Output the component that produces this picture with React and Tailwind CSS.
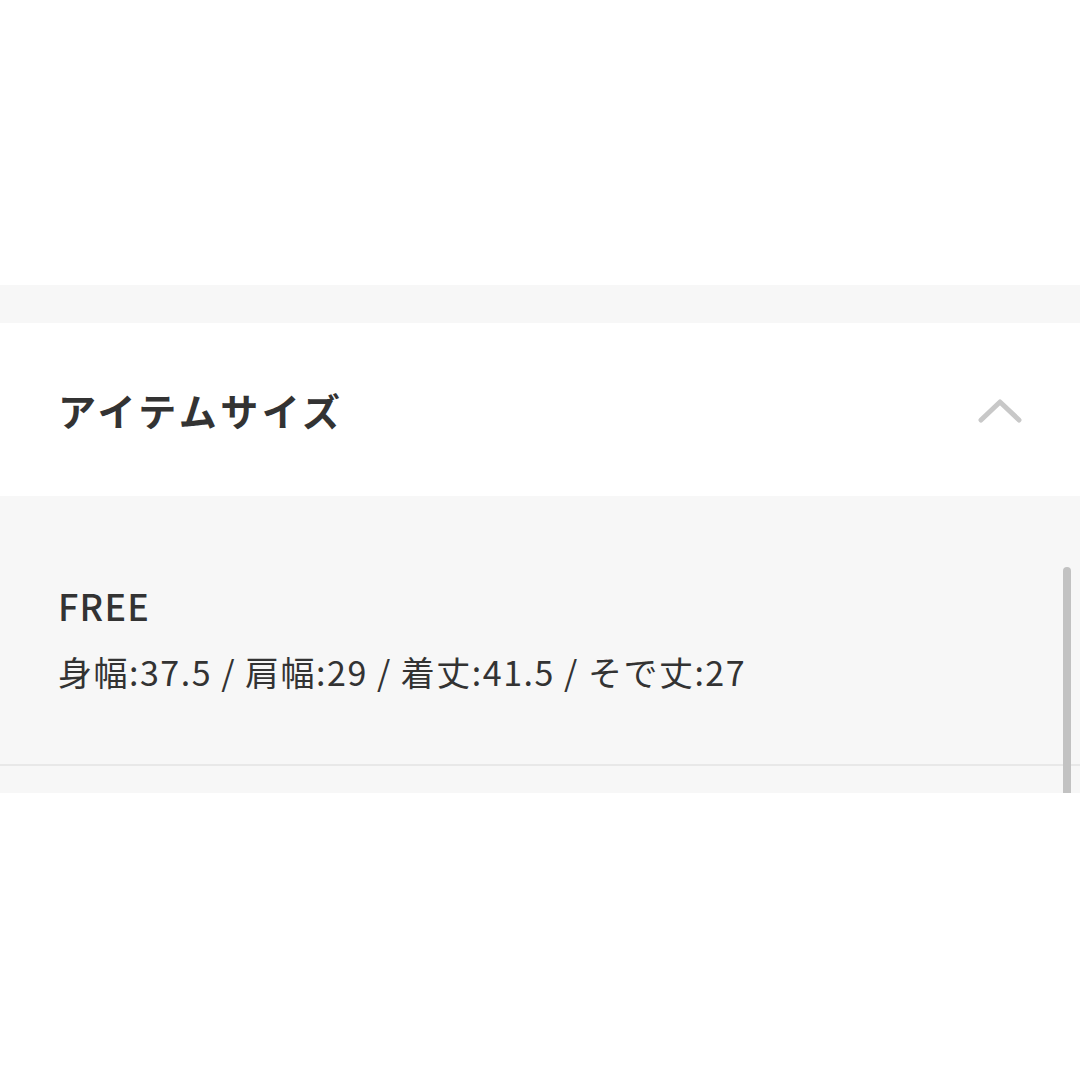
export default function App() {
  const font = { fontFamily: '"Noto Sans CJK JP", "Noto Sans", sans-serif' };
  return (
    <div className="w-[1080px] h-[1080px] bg-white flex flex-col text-[#333333]" style={font}>
      <div className="h-[285px] shrink-0" />
      <div className="h-[38px] shrink-0 bg-[#f7f7f7]" />

      {/* accordion header */}
      <div className="h-[173px] shrink-0 flex items-center justify-between pl-[58px] pr-[58px]">
        <h2 className="text-[38px] font-bold leading-none tracking-[3.5px]">アイテムサイズ</h2>
        <svg width="44" height="28" viewBox="0 0 44 28" fill="none">
          <path d="M3 24 L22 6 L41 24" stroke="#c8c8c8" strokeWidth="5" strokeLinecap="round" strokeLinejoin="round" />
        </svg>
      </div>

      {/* size panel */}
      <div className="relative h-[297px] shrink-0 bg-[#f7f7f7]">
        <div className="pl-[58px] pt-[91px]">
          <div className="text-[36px] font-medium leading-none tracking-[1.2px]">FREE</div>
          <div className="mt-[32px] text-[34px] leading-none tracking-[1.5px]">身幅:37.5 / 肩幅:29 / 着丈:41.5 / そで丈:27</div>
        </div>
        <div className="absolute left-0 right-0 top-[268px] h-[2px] bg-[#e8e8e8]" />
        <div className="absolute right-[9px] top-[71px] bottom-0 w-[8px] rounded-t-full bg-[#c2c2c2]" />
      </div>
    </div>
  );
}
